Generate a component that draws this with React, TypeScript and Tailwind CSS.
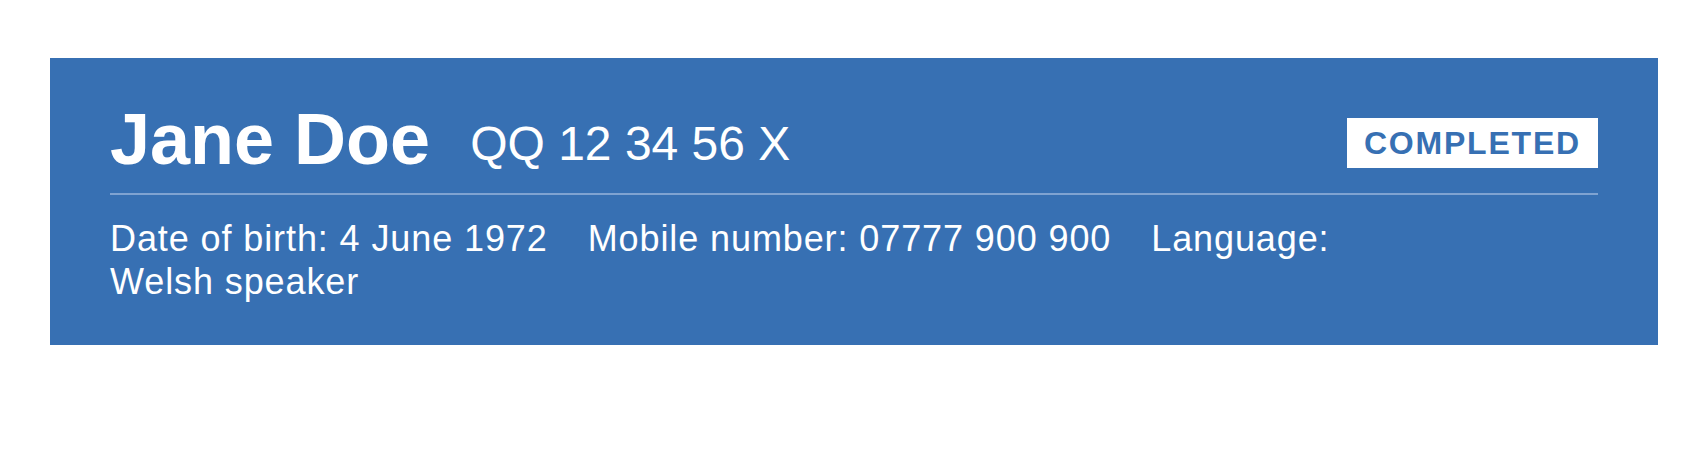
import React from "react";

export default function App() {
  return (
    <div className="w-[1708px] h-[476px] bg-white pt-[58px] px-[50px] font-['Liberation_Sans',Arial,sans-serif]">
      <div className="bg-[#3770b3] text-white pt-[44px] pb-[42px] px-[60px]">
        <div className="flex items-start h-[75px]">
          <h1 className="text-[72px] leading-[75px] font-bold">Jane Doe</h1>
          <span className="ml-[40px] mt-[4px] text-[48px] leading-[75px]">QQ 12 34 56 X</span>
          <span className="ml-auto mt-[16px] bg-white text-[#3770b3] font-bold uppercase text-[32px] leading-[32px] tracking-[1.8px] py-[9px] pl-[17px] pr-[17px]">
            Completed
          </span>
        </div>
        <div className="mt-[16px] h-[2px] bg-[#7fa3d1]" />
        <p className="mt-[22px] max-w-[1270px] text-[36px] leading-[43px] tracking-[0.9px]">
          <span className="mr-[40px]">Date of birth: 4 June 1972</span>
          <span className="mr-[40px]">Mobile number: 07777 900 900</span>
          <span>Language: Welsh speaker</span>
        </p>
      </div>
    </div>
  );
}
